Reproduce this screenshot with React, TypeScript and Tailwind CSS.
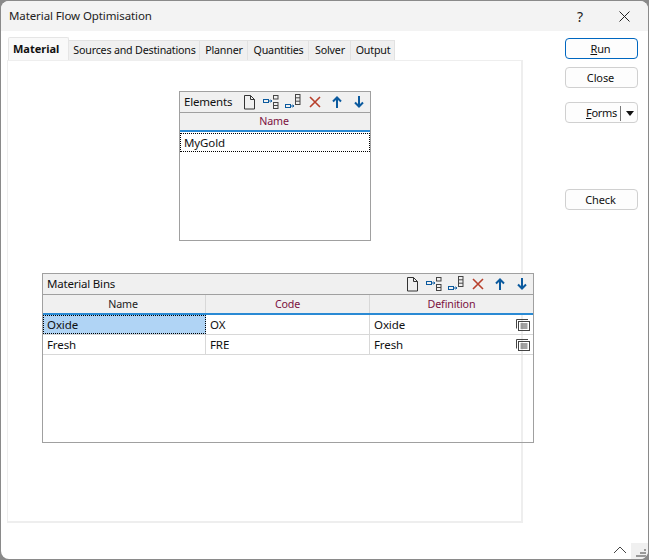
const font = { fontFamily: '"Noto Sans", "Open Sans", sans-serif' };

const TABS = [
  { label: "Sources and Destinations", w: "w-[131px]" },
  { label: "Planner", w: "w-[48px]" },
  { label: "Quantities", w: "w-[61px]" },
  { label: "Solver", w: "w-[42px]" },
  { label: "Output", w: "w-[44px]" },
];

function Toolbar() {
  return (
    <div className="flex items-center gap-[6px]">
      <svg width="16" height="16" viewBox="0 0 16 16" fill="none" stroke="#333" strokeWidth="1">
        <path d="M3.5 1.5h6l4 4v9.5h-10z M9.5 1.5v4h4" />
      </svg>
      <svg width="16" height="16" viewBox="0 0 16 16" fill="none" stroke="#0b5a9e" strokeWidth="1">
        <rect x="0.5" y="5.5" width="5" height="3" />
        <path d="M5.5 7h3M7.5 5.8l1.5 1.2-1.5 1.2" />
        <rect x="10.5" y="1.5" width="4.5" height="3.5" stroke="#444" />
        <rect x="10.5" y="8.5" width="4.5" height="6" stroke="#444" />
        <path d="M10.5 11.5h4.5" stroke="#444" />
      </svg>
      <svg width="16" height="16" viewBox="0 0 16 16" fill="none" stroke="#0b5a9e" strokeWidth="1">
        <rect x="0.5" y="10.5" width="5" height="3" />
        <path d="M5.5 12h3M7.5 10.8l1.5 1.2-1.5 1.2" />
        <rect x="10.5" y="0.5" width="4.5" height="10" stroke="#444" />
        <path d="M10.5 3.8h4.5M10.5 7.2h4.5" stroke="#444" />
      </svg>
      <svg width="16" height="16" viewBox="0 0 16 16" fill="none" stroke="#b8402c" strokeWidth="1.6">
        <path d="M3 3l10 10M13 3L3 13" />
      </svg>
      <svg width="16" height="16" viewBox="0 0 16 16" fill="none" stroke="#0b5a9e" strokeWidth="2">
        <path d="M8 14V4M4 7.5l4-4 4 4" />
      </svg>
      <svg width="16" height="16" viewBox="0 0 16 16" fill="none" stroke="#0b5a9e" strokeWidth="2">
        <path d="M8 2v10M4 8.5l4 4 4-4" />
      </svg>
    </div>
  );
}

function GridTitle({ title }: { title: string }) {
  return (
    <div className="h-[21px] flex items-center justify-between pl-[4px] pr-[3px] bg-[#f0f0f0] border-b border-[#a0a0a0] text-[11.5px] tracking-[-0.2px] text-[#111]">
      <span>{title}</span>
      <Toolbar />
    </div>
  );
}

function FormIcon() {
  return (
    <svg width="14" height="12" viewBox="0 0 14 12" fill="none" stroke="#444" strokeWidth="1">
      <path d="M0.5 9.5V0.5H12" />
      <rect x="2.5" y="2.5" width="11" height="9" />
      <path d="M4.5 5h7M4.5 7h7M4.5 9h7" />
    </svg>
  );
}

function Btn({ label, primary }: { label: React.ReactNode; primary?: boolean }) {
  return (
    <div
      className={`h-[21px] w-[73px] flex items-center justify-center pr-[2px] pt-[1px] rounded-[4px] border bg-[#fdfdfd] text-[11px] tracking-[-0.1px] text-[#111] ${
        primary ? "border-[#0067c0]" : "border-[#d0d0d0]"
      }`}
    >
      {label}
    </div>
  );
}

const BINS = [
  { name: "Oxide", code: "OX", def: "Oxide", selected: true },
  { name: "Fresh", code: "FRE", def: "Fresh", selected: false },
];

export default function App() {
  return (
    <div className="w-[649px] h-[560px] bg-[#8a8a8a] overflow-hidden pl-[1px]" style={font}>
      <div className="w-[647px] h-[558px] mt-[1px] bg-white rounded-[8px] overflow-hidden flex flex-col">
        {/* title bar */}
        <div className="h-[30px] shrink-0 bg-[#f3f3f3] flex items-center justify-between pl-[8px] text-[11.5px] tracking-[-0.1px] text-[#222]">
          <span>Material Flow Optimisation</span>
          <div className="flex items-center">
            <span className="w-[46px] pl-[2px] text-center text-[14px]">?</span>
            <svg className="ml-[17px] mr-[18px]" width="11" height="11" viewBox="0 0 11 11" stroke="#222" strokeWidth="1">
              <path d="M0.5 0.5l10 10M10.5 0.5l-10 10" />
            </svg>
          </div>
        </div>

        <div className="flex-1 flex">
          {/* left: tabs and panel */}
          <div className="w-[564px] pl-[6px] pt-[6px] flex flex-col">
            <div className="flex items-end h-[23px] pl-[1px] text-[10.7px] tracking-[-0.2px] text-[#111] whitespace-nowrap">
              <div className="w-[61px] h-[23px] pl-[4px] pt-[3px] bg-[#f9f9f9] border border-b-0 border-[#e5e5e5] rounded-t-[2px] text-[11px] tracking-normal font-bold text-[#111]">
                Material
              </div>
              {TABS.map((t) => (
                <div
                  key={t.label}
                  className={`${t.w} h-[20px] pl-[1px] flex items-center justify-center bg-[#f0f0f0] border-r border-t border-[#e2e2e2]`}
                >
                  {t.label}
                </div>
              ))}
            </div>

            <div className="w-[516px] h-[463px] border-t border-l border-[#eeeeee] border-r-2 border-b-2 pt-[30px] pl-[34px]">
              {/* elements */}
              <div className="ml-[137px] w-[192px] h-[150px] border border-[#a0a0a0] text-[11.5px] tracking-[-0.1px]">
                <GridTitle title="Elements" />
                <div className="h-[19px] pr-[2px] flex items-center justify-center bg-[#f0f0f0] border-b-2 border-[#2a8ad4] text-[10.7px] text-[#7b1040]">
                  Name
                </div>
                <div className="h-[19px] mt-[1px] flex items-center pl-[3px] border border-dotted border-black text-[#111]">
                  MyGold
                </div>
              </div>

              {/* material bins */}
              <div className="mt-[32px] w-[492px] h-[170px] border border-[#a0a0a0] text-[11.5px] tracking-[-0.1px]">
                <GridTitle title="Material Bins" />
                <div className="h-[20px] grid grid-cols-[163px_164px_1fr] bg-[#f0f0f0] border-b-2 border-[#2a8ad4] text-[10.7px] tracking-[-0.15px]">
                  <div className="flex items-center justify-center pr-[2px] border-r border-[#d8d8d8] text-[#222]">Name</div>
                  <div className="flex items-center justify-center border-r border-[#d8d8d8] text-[#7b1040]">Code</div>
                  <div className="flex items-center justify-center text-[#7b1040]">Definition</div>
                </div>
                {BINS.map((b) => (
                  <div key={b.name} className="h-[20px] grid grid-cols-[163px_164px_1fr] border-b border-[#d8d8d8] text-[#111]">
                    <div
                      className={`flex items-center pl-[3px] ${
                        b.selected ? "bg-[#b0d4f5] border border-dotted border-black" : "pl-[4px] border-r border-[#d8d8d8]"
                      }`}
                    >
                      {b.name}
                    </div>
                    <div className="flex items-center pl-[4px] border-r border-[#d8d8d8]">{b.code}</div>
                    <div className="flex items-center justify-between pl-[4px] pr-[3px]">
                      {b.def}
                      <FormIcon />
                    </div>
                  </div>
                ))}
              </div>
            </div>
          </div>

          {/* right: buttons */}
          <div className="w-[83px] pt-[7px] flex flex-col">
            <Btn primary label={<span><u>R</u>un</span>} />
            <div className="mt-[8px]">
              <Btn label="Close" />
            </div>
            <div className="mt-[14px] h-[21px] w-[73px] pt-[1px] flex items-center rounded-[4px] border border-[#d0d0d0] bg-[#fdfdfd] text-[11px] tracking-[-0.3px] text-[#111]">
              <span className="ml-[20px] w-[34px]"><u>F</u>orms</span>
              <span className="h-[15px] border-l border-[#777]" />
              <svg className="ml-[5px]" width="8" height="5" viewBox="0 0 8 5" fill="#111">
                <path d="M0 0h8L4 5z" />
              </svg>
            </div>
            <div className="mt-[66px]">
              <Btn label="Check" />
            </div>
            <div className="mt-auto self-end flex items-end">
              <svg className="mb-[5px] mr-[4px]" width="14" height="8" viewBox="0 0 14 8" fill="none" stroke="#444" strokeWidth="1">
                <path d="M1 7l6-6 6 6" />
              </svg>
              <div className="w-[17px] h-[16px] bg-[#f0f0f0] flex flex-col items-end justify-end p-[2px] gap-[1px]">
                <span className="w-[2px] h-[2px] bg-[#999]" />
                <span className="w-[6px] h-[2px] bg-[#999]" />
                <span className="w-[10px] h-[2px] bg-[#999]" />
              </div>
            </div>
          </div>
        </div>
      </div>
    </div>
  );
}
